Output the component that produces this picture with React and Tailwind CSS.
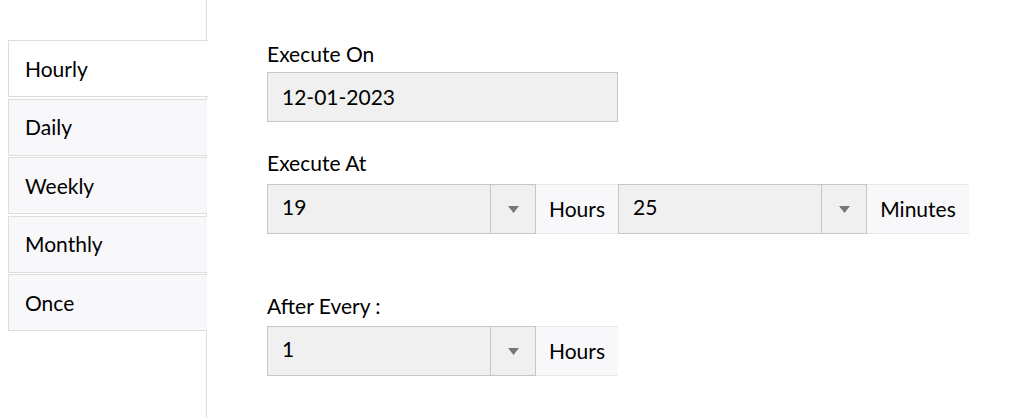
import React, { useState } from 'react';

const FONT = { fontFamily: 'Lato, "Open Sans", sans-serif' };

function Caret() {
  return (
    <svg width="11" height="7" viewBox="0 0 11 7" className="text-[#777]">
      <path d="M0 0 L11 0 L5.5 7 Z" fill="currentColor" />
    </svg>
  );
}

function SelectBox({ value, width }) {
  return (
    <div className={`flex h-[50px] border border-[#c6c6c6] bg-[#f0f0f0] ${width}`}>
      <div className="flex-1 pl-[14px] pb-[5px] flex items-center text-[21px] text-black">{value}</div>
      <div className="w-[45px] border-l border-[#c6c6c6] flex items-center justify-center">
        <Caret />
      </div>
    </div>
  );
}

function Addon({ label, width }) {
  return (
    <div className={`h-[50px] flex items-center justify-center bg-[#f8f8fa] border-y border-[#e8e8e8] text-[21px] text-black ${width}`}>
      {label}
    </div>
  );
}

export default function App() {
  const [tab, setTab] = useState('Hourly');
  const tabs = ['Hourly', 'Daily', 'Weekly', 'Monthly', 'Once'];

  return (
    <div className="flex min-h-[418px] bg-white text-black" style={FONT}>
      {/* SIDE TABS */}
      <div className="w-[207px] shrink-0 pl-2 pt-10 border-r border-[#dddddd]">
        {tabs.map((t) => (
          <button
            key={t}
            onClick={() => setTab(t)}
            className={`w-[199px] h-[57px] mb-[1.5px] flex items-center pl-4 text-[21px] border border-[#dddddd] text-left ${
              tab === t ? 'bg-white border-r-0 w-[200px] -mr-px relative' : 'bg-[#f8f8fa] border-r-0'
            }`}
          >
            {t}
          </button>
        ))}
      </div>

      {/* FORM */}
      <div className="flex-1 pl-[60px] pt-[41px]">
        <div className="text-[21px] leading-[25px]">Execute On</div>
        <div className="mt-[6px] w-[351px] h-[50px] border border-[#c6c6c6] bg-[#f0f0f0] pl-[14px] flex items-center text-[21px]">
          12-01-2023
        </div>

        <div className="mt-[28px] text-[21px] leading-[25px]">Execute At</div>
        <div className="mt-[9px] flex">
          <SelectBox value="19" width="w-[269px]" />
          <Addon label="Hours" width="w-[82px]" />
          <SelectBox value="25" width="w-[249px]" />
          <Addon label="Minutes" width="w-[102px]" />
        </div>

        <div className="mt-[59px] text-[21px] leading-[25px]">After Every :</div>
        <div className="mt-[8px] flex">
          <SelectBox value="1" width="w-[269px]" />
          <Addon label="Hours" width="w-[82px]" />
        </div>
      </div>
    </div>
  );
}
